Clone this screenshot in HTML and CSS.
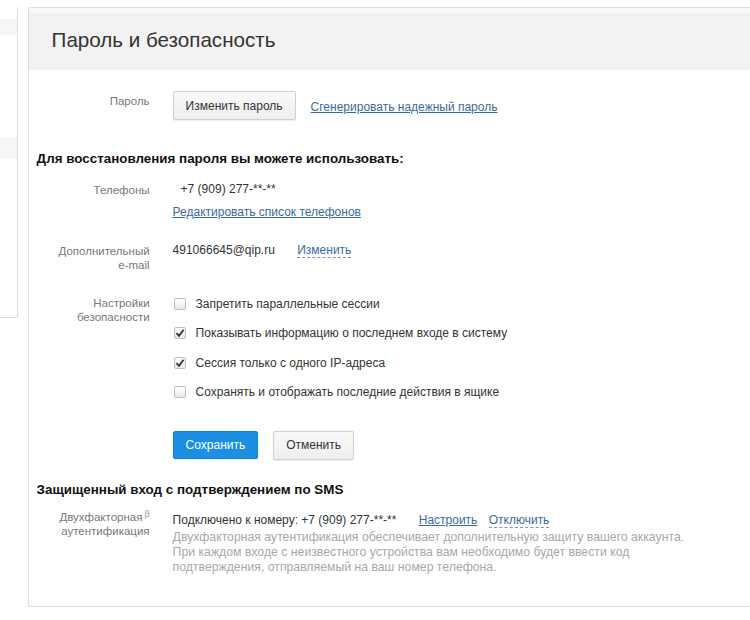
FILE: index.html
```html
<!DOCTYPE html>
<html lang="ru">
<head>
    <meta charset="UTF-8">
    <title>Пароль и безопасность</title>
    <link rel="stylesheet" href="styles.css">
</head>
<body>
    <div class="page">
        <aside class="sidebar">
            <div class="side-item"></div>
            <div class="side-item side-item-low"></div>
        </aside>

        <section class="card">
            <header class="card-header">
                <h1>Пароль и безопасность</h1>
            </header>

            <div class="card-body">
                <div class="row row-password">
                    <div class="label">Пароль</div>
                    <div class="value inline">
                        <button class="btn">Изменить пароль</button>
                        <a href="#" class="link">Сгенерировать надежный пароль</a>
                    </div>
                </div>

                <h2 class="section-title title-restore">Для восстановления пароля вы можете использовать:</h2>

                <div class="row row-phones">
                    <div class="label">Телефоны</div>
                    <div class="value">
                        <div class="phone">+7 (909) 277-**-**</div>
                        <a href="#" class="link link-block">Редактировать список телефонов</a>
                    </div>
                </div>

                <div class="row row-email">
                    <div class="label">Дополнительный<br>e-mail</div>
                    <div class="value">
                        <span>491066645@qip.ru</span>
                        <a href="#" class="link-dashed email-change">Изменить</a>
                    </div>
                </div>

                <div class="row row-security">
                    <div class="label">Настройки<br>безопасности</div>
                    <div class="value options">
                        <label class="option"><span class="box"></span>Запретить параллельные сессии</label>
                        <label class="option"><span class="box checked"><svg width="10" height="10" viewBox="0 0 10 10"><path d="M1.5 5.2 L4 7.8 L8.6 1.8" fill="none" stroke="#333" stroke-width="1.8"/></svg></span>Показывать информацию о последнем входе в систему</label>
                        <label class="option"><span class="box checked"><svg width="10" height="10" viewBox="0 0 10 10"><path d="M1.5 5.2 L4 7.8 L8.6 1.8" fill="none" stroke="#333" stroke-width="1.8"/></svg></span>Сессия только с одного IP-адреса</label>
                        <label class="option"><span class="box"></span>Сохранять и отображать последние действия в ящике</label>
                    </div>
                </div>

                <div class="row row-actions">
                    <div class="label"></div>
                    <div class="value inline actions">
                        <button class="btn btn-primary">Сохранить</button>
                        <button class="btn">Отменить</button>
                    </div>
                </div>

                <h2 class="section-title title-sms">Защищенный вход с подтверждением по SMS</h2>

                <div class="row row-2fa">
                    <div class="label">Двухфакторная<sup class="beta">β</sup><br>аутентификация</div>
                    <div class="value">
                        <div class="connected">
                            Подключено к номеру: +7 (909) 277-**-**
                            <a href="#" class="link tune">Настроить</a>
                            <a href="#" class="link-dashed">Отключить</a>
                        </div>
                        <p class="hint">Двухфакторная аутентификация обеспечивает дополнительную защиту вашего аккаунта.<br>При каждом входе с неизвестного устройства вам необходимо будет ввести код<br>подтверждения, отправляемый на ваш номер телефона.</p>
                    </div>
                </div>
            </div>
        </section>
    </div>
</body>
</html>
```

FILE: styles.css
```css
* {
    margin: 0;
    padding: 0;
    box-sizing: border-box;
}

body {
    font-family: Arial, "Liberation Sans", sans-serif;
    font-size: 12px;
    color: #333;
    background-color: #fff;
    overflow: hidden;
}

.page {
    display: flex;
    align-items: flex-start;
    gap: 10px;
    padding-top: 7px;
}

/* Left menu column, mostly cut off */
.sidebar {
    width: 18px;
    height: 311px;
    border-right: 1px solid #dcdcdc;
    border-bottom: 1px solid #dcdcdc;
    border-bottom-right-radius: 3px;
    padding-top: 12px;
}

.side-item {
    height: 16px;
    background-color: #f6f6f6;
}

.side-item-low {
    margin-top: 102px;
    height: 22px;
}

.card {
    width: 740px;
    height: 600px;
    border: 1px solid #dedede;
    border-right: none;
    border-radius: 3px 0 0 3px;
    box-shadow: 0 1px 1px rgba(0, 0, 0, 0.06);
}

.card-header {
    height: 62px;
    background-color: #f2f2f2;
    border-top: 5px solid #f8f8f8;
    display: flex;
    align-items: center;
    padding-left: 23px;
}

.card-header h1 {
    font-size: 20.6px;
    font-weight: normal;
    color: #333;
    margin-bottom: 4px;
}

.card-body {
    padding: 21px 0 0 8px;
}

.row {
    display: flex;
    align-items: flex-start;
}

.label {
    width: 113px;
    margin-right: 23px;
    text-align: right;
    font-size: 11.5px;
    line-height: 14px;
    color: #777;
    flex-shrink: 0;
}

.value {
    flex: 1;
    line-height: 16px;
}

.inline {
    display: flex;
    align-items: center;
}

.link {
    color: #3a6a9c;
    text-decoration: underline;
}

.link-dashed {
    color: #3a6a9c;
    text-decoration: none;
    border-bottom: 1px dashed #7396bb;
}

.btn {
    font-family: Arial, "Liberation Sans", sans-serif;
    font-size: 12px;
    color: #333;
    height: 29px;
    padding: 0 12px;
    background: linear-gradient(#f9f9f9, #eeeeee);
    border: 1px solid #d0d0d0;
    border-radius: 2px;
    box-shadow: 0 1px 1px rgba(0, 0, 0, 0.08);
    cursor: pointer;
}

.btn-primary {
    background: #1a8fe3;
    border-color: #1482d2;
    color: #fff;
    height: 28px;
    padding: 0 12px;
}

.row-password .label {
    padding-top: 3px;
}

.row-password .link {
    margin-left: 15px;
    margin-top: 2px;
}

.section-title {
    font-size: 13.4px;
    font-weight: bold;
    line-height: 16px;
    color: #111;
}

.title-restore {
    margin-top: 31px;
}

.row-phones {
    margin-top: 14px;
}

.row-phones .label {
    padding-top: 2px;
}

.phone {
    padding-left: 8px;
}

.link-block {
    display: inline-block;
    margin-top: 7px;
}

.row-email {
    margin-top: 22px;
}

.row-email .label {
    padding-top: 2px;
}

.email-change {
    margin-left: 19px;
}

.row-security {
    margin-top: 24px;
}

.options {
    display: flex;
    flex-direction: column;
    gap: 13.3px;
    padding-left: 1px;
}

.option {
    display: flex;
    align-items: center;
    height: 16px;
}

.box {
    width: 12px;
    height: 12px;
    border: 1px solid #bdbdbd;
    border-radius: 2px;
    background: linear-gradient(#fdfdfd, #e9e9e9);
    margin-right: 10px;
    display: flex;
    align-items: center;
    justify-content: center;
}

.row-actions {
    margin-top: 31px;
}

.actions {
    gap: 15px;
}

.title-sms {
    margin-top: 22px;
}

.row-2fa {
    margin-top: 12px;
}

.beta {
    font-size: 9px;
    color: #999;
    margin-left: 2px;
    vertical-align: 4px;
    line-height: 0;
}

.row-2fa .value {
    padding-top: 2px;
}

.tune {
    margin-left: 19px;
}

.connected .link-dashed {
    margin-left: 8px;
}

.hint {
    margin-top: 2px;
    line-height: 15px;
    font-size: 12.25px;
    color: #a8a8a8;
}
```
